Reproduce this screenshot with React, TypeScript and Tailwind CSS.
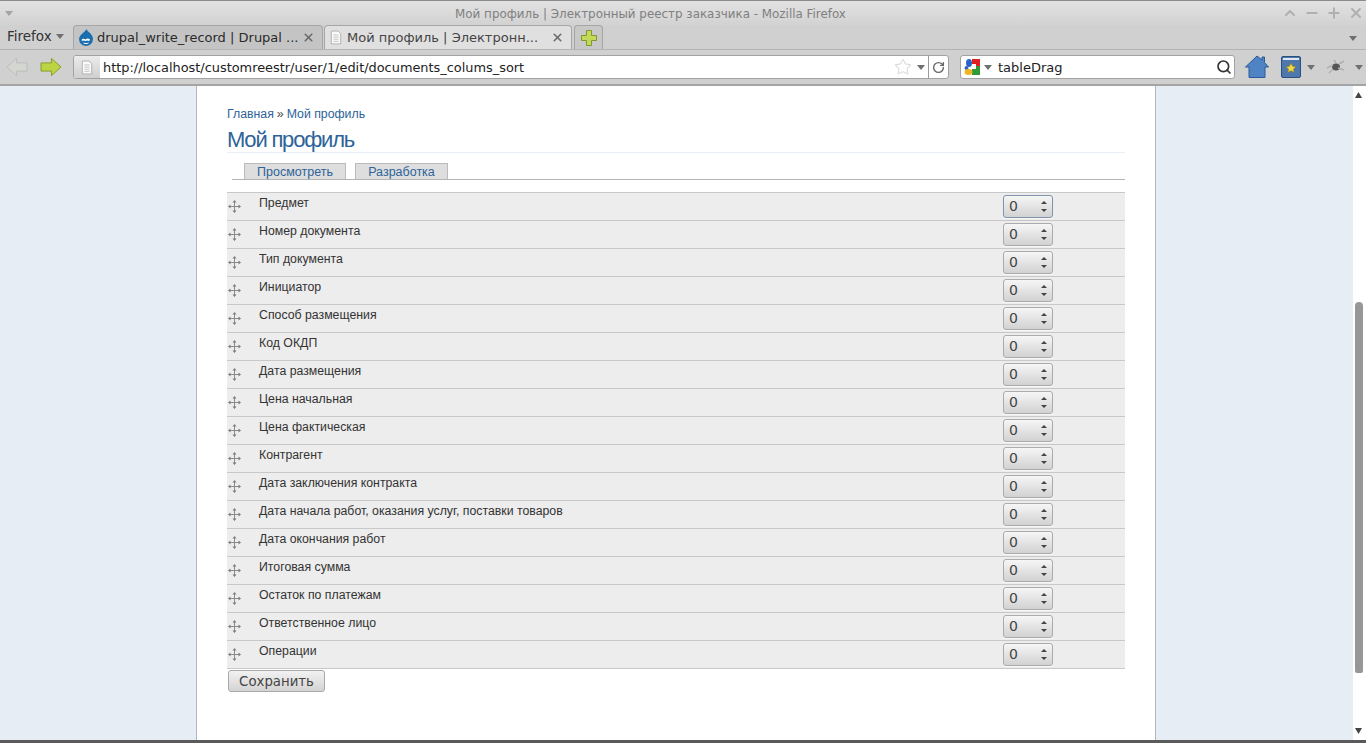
import { ChevronUp, Minus, Plus, X, RotateCw, Search, Star } from 'lucide-react'

const rows = [
  'Предмет',
  'Номер документа',
  'Тип документа',
  'Инициатор',
  'Способ размещения',
  'Код ОКДП',
  'Дата размещения',
  'Цена начальная',
  'Цена фактическая',
  'Контрагент',
  'Дата заключения контракта',
  'Дата начала работ, оказания услуг, поставки товаров',
  'Дата окончания работ',
  'Итоговая сумма',
  'Остаток по платежам',
  'Ответственное лицо',
  'Операции',
]

function Caret({ className = '' }: { className?: string }) {
  return (
    <svg width="8" height="5" viewBox="0 0 8 5" className={className}>
      <path d="M0 0h8L4 5z" fill="#6f6f6f" />
    </svg>
  )
}

function PageIcon() {
  return (
    <svg width="12" height="15" viewBox="0 0 14 16" className="shrink-0">
      <path d="M1.500.5h8l3 3v12h-11z" fill="#fafafa" stroke="#a8a8a8" />
      <path d="M4 5h6M4 7.500h6M4 10h6M4 12.500h6" stroke="#bdbdbd" />
    </svg>
  )
}

function DrupalIcon() {
  return (
    <svg width="16" height="17" viewBox="0 0 16 17" className="shrink-0">
      <path d="M8.500 0c.5 2.500 6.500 5 6.500 10a7 7 0 0 1-14 0C1 5.500 7.500 3 8.500 0z" fill="#1b6fb0" />
      <path d="M3.500 11c1-1.500 2.500-1.500 4-.5 1.500-1 3-1.500 4.500 0-.5 2-2 1.500-2.500 1l-2 .5-2-.5c-.5.500-1.500.500-2-.5z" fill="#fff" />
      <path d="M5.500 14c1.500.8 3.500.8 5 0" stroke="#fff" fill="none" />
    </svg>
  )
}

function GoogleIcon() {
  return (
    <svg width="16" height="16" viewBox="0 0 16 16" className="shrink-0">
      <rect x="8" y="0" width="8" height="7" fill="#e02020" />
      <rect x="8" y="7" width="8" height="9" fill="#2f9a3a" />
      <rect x="8" y="5" width="4" height="5" fill="#fff" />
      <ellipse cx="5" cy="4" rx="3" ry="4" fill="#2a62c8" />
      <circle cx="2.500" cy="9" r="2" fill="#2a62c8" />
      <ellipse cx="4.500" cy="13" rx="4" ry="3" fill="#eeb422" />
    </svg>
  )
}

function DragHandle() {
  return (
    <svg width="13" height="13" viewBox="0 0 13 13" className="mt-[7px] ml-[1px] shrink-0">
      <path d="M6.500 1v11M1 6.500h11" stroke="#8a8a8a" />
      <path d="M6.500 0l2 2.500h-4zM6.500 13l2-2.500h-4zM0 6.500l2.500-2v4zM13 6.500l-2.500-2v4z" fill="#7c7c7c" />
    </svg>
  )
}

function Spinner({ focused }: { focused: boolean }) {
  return (
    <div
      className={`mt-[2px] flex h-[23px] w-[50px] items-center justify-between rounded-[3px] border bg-gradient-to-b from-[#f6f6f6] to-[#d2d2d2] pr-[5px] pl-[5px] font-['DejaVu_Sans',sans-serif] text-[14px] text-[#444] shadow-[0_1px_0_#f8f8f8] ${
        focused ? 'border-[#7f93ad]' : 'border-[#ababab]'
      }`}
    >
      <span>0</span>
      <span className="flex flex-col gap-[5px]">
        <svg width="6" height="3" viewBox="0 0 6 3" className="block">
          <path d="M3 0l3 3H0z" fill="#444" />
        </svg>
        <svg width="6" height="3" viewBox="0 0 6 3" className="block">
          <path d="M0 0h6L3 3z" fill="#444" />
        </svg>
      </span>
    </div>
  )
}

export default function App() {
  return (
    <div className="flex h-[743px] w-[1366px] flex-col overflow-hidden bg-[#d0d0d0] font-['DejaVu_Sans',sans-serif]">
      {/* title bar */}
      <div className="flex h-[25px] shrink-0 items-center justify-between border-t border-[#8c8c8c] bg-gradient-to-b from-[#e2e2e2] to-[#d2d2d2] pr-[2px] pl-[5px]">
        <Caret className="opacity-50" />
        <span className="mt-[4px] ml-[6px] text-[11.9px] text-[#808080]">Мой профиль | Электронный реестр заказчика - Mozilla Firefox</span>
        <div className="flex items-center gap-[6px] text-[#b0b0b0]">
          <ChevronUp size={16} strokeWidth={3} />
          <Minus size={16} strokeWidth={3} />
          <Plus size={16} strokeWidth={3} />
          <X size={16} strokeWidth={3} />
        </div>
      </div>

      {/* tab strip */}
      <div className="flex h-[25px] shrink-0 items-end border-b border-[#b4b4b4] bg-[#d0d0d0] pl-[7px]">
        <div className="flex h-[24px] w-[66px] items-center gap-[4px] pb-[2px] text-[13.5px] text-[#333]">
          Firefox
          <Caret />
        </div>
        <div className="flex h-[24px] w-[250px] items-center gap-[3px] rounded-t-[4px] border border-b-0 border-[#a6a6a6] bg-[#c4c4c4] pr-[7px] pl-[4px] text-[13px] text-[#2a2a2a]">
          <DrupalIcon />
          <span className="flex-1 whitespace-nowrap">drupal_write_record | Drupal ...</span>
          <X size={13} strokeWidth={3} className="shrink-0 text-[#6a6a6a]" />
        </div>
        <div className="ml-[1px] flex h-[24px] w-[248px] items-center gap-[5px] rounded-t-[4px] border border-b-0 border-[#a6a6a6] bg-[#e0e0e0] pr-[7px] pl-[5px] text-[13px] text-[#444]">
          <PageIcon />
          <span className="flex-1 whitespace-nowrap">Мой профиль | Электронн...</span>
          <X size={13} strokeWidth={3} className="shrink-0 text-[#6a6a6a]" />
        </div>
        <div className="ml-[2px] flex h-[24px] w-[29px] items-center justify-center rounded-t-[4px] border border-b-0 border-[#a6a6a6] bg-[#c8c8c8]">
          <svg width="16" height="16" viewBox="0 0 16 16">
            <path d="M5.500.5h5v5h5v5h-5v5h-5v-5h-5v-5h5z" fill="#c4d95a" stroke="#7d9a2a" />
          </svg>
        </div>
        <div className="flex flex-1 justify-end pr-[9px] pb-[8px]">
          <Caret />
        </div>
      </div>

      {/* nav bar */}
      <div className="flex h-[36px] shrink-0 items-center border-b-2 border-[#a4a4a4] bg-[#d0d0d0] pr-[2px] pl-[6px]">
        <svg width="22" height="20" viewBox="0 0 24 22">
          <path d="M1 11L11.500 1.500v5H23v9H11.500v5z" fill="#d4d6d0" stroke="#bcbcb8" />
        </svg>
        <svg width="22" height="20" viewBox="0 0 24 22" className="ml-[12px]">
          <path d="M23 11L12.500 1.500v5H1v9h11.500v5z" fill="#bcd444" stroke="#7f9a22" />
        </svg>
        <div className="ml-[11px] flex h-[24px] w-[876px] items-center rounded-[3px] border border-[#a2a2a2] bg-white text-[12.9px] text-[#222]">
          <span className="flex h-full w-[26px] shrink-0 items-center justify-center rounded-l-[3px] bg-gradient-to-b from-[#ececec] to-[#cfcfcf]">
            <PageIcon />
          </span>
          <span className="mt-[1px] ml-[3px] flex-1 whitespace-nowrap">http://localhost/customreestr/user/1/edit/documents_colums_sort</span>
          <Star size={18} strokeWidth={1.500} className="mr-[5px] text-[#dcdcdc]" />
          <Caret className="mr-[3px]" />
          <span className="flex h-full w-[20px] items-center justify-center border-l border-[#9a9a9a]">
            <RotateCw size={13} strokeWidth={2.500} className="text-[#666]" />
          </span>
        </div>
        <div className="ml-[11px] flex h-[24px] w-[275px] items-center rounded-[3px] border border-[#a2a2a2] bg-white pr-[2px] pl-[3px] text-[13px] text-[#222]">
          <GoogleIcon />
          <Caret className="ml-[4px]" />
          <span className="mt-[1px] ml-[6px] flex-1">tableDrag</span>
          <Search size={16} strokeWidth={2.500} className="text-[#333]" />
        </div>
        <svg width="24" height="24" viewBox="0 0 24 24" className="ml-[10px]">
          <path d="M12 1l5 4V2h2.500v5.500L23.500 12H20v10.500H4V12H.5z" fill="#4f83c4" stroke="#2a5a98" />
        </svg>
        <svg width="20" height="22" viewBox="0 0 20 22" className="ml-[12px]">
          <rect x=".5" y=".5" width="19" height="21" rx="1.500" fill="#4d77ad" stroke="#2c4f80" />
          <rect x="2" y="2" width="16" height="2" fill="#dfe8f2" />
          <path d="M10 7l1.600 3.300 3.400.4-2.500 2.300.7 3.500-3.200-1.800-3.200 1.800.7-3.500L5 10.700l3.400-.4z" fill="#f2d94a" stroke="#8a7a1a" strokeWidth=".6" />
        </svg>
        <Caret className="ml-[6px]" />
        <svg width="20" height="16" viewBox="0 0 20 16" className="ml-[11px]">
          <ellipse cx="10" cy="8" rx="4" ry="3.500" fill="#555" />
          <path d="M7 6L1 9M13 5l5-3M12 9l6 2M7 10l-4 4M10 4L8 1" stroke="#b0b0b0" strokeWidth="1.500" />
        </svg>
        <Caret className="ml-[9px]" />
      </div>

      {/* viewport */}
      <div className="flex min-h-0 flex-1">
        <div className="w-[196px] shrink-0 bg-[#e6edf5]" />
        <main className="flex w-[960px] shrink-0 flex-col border-x border-[#b4b8bd] bg-white px-[30px] pt-[21px] font-['Liberation_Sans',sans-serif]">
          <div className="flex h-[14px] items-center text-[12.3px] text-[#2d6399]">
            <span>Главная</span>
            <span className="mx-[3px] text-[#444]">»</span>
            <span>Мой профиль</span>
          </div>
          <h1 className="mt-[6px] h-[26px] border-b border-[#e8eef5] text-[22px] leading-[26px] tracking-[-1.2px] text-[#2d6399]">
            Мой профиль
          </h1>
          <div className="mt-[11px] ml-[5px] flex h-[16px] items-end border-b border-[#b4b4b4] pl-[12px] text-[12.5px] text-[#2d6399]">
            <span className="flex h-[16px] w-[102px] items-center justify-center border border-b-0 border-[#bbb] bg-[#dedede] pt-[1px]">
              Просмотреть
            </span>
            <span className="ml-[9px] flex h-[16px] w-[93px] items-center justify-center border border-b-0 border-[#bbb] bg-[#dedede] pt-[1px]">
              Разработка
            </span>
          </div>
          <div className="mt-[12px] border-t border-[#c8c8c8]">
            {rows.map((row, i) => (
              <div key={row} className="flex h-[28px] items-start border-b border-[#c8c8c8] bg-[#ededed] text-[12.3px] text-[#333]">
                <DragHandle />
                <span className="ml-[18px] flex-1 pt-[2px] leading-[16px]">{row}</span>
                <div className="w-[122px] shrink-0">
                  <Spinner focused={i === 0} />
                </div>
              </div>
            ))}
          </div>
          <button className="mt-[1px] ml-[1px] flex h-[22px] w-[97px] items-center justify-center rounded-[3px] border border-[#a8a8a8] bg-gradient-to-b from-[#f2f2f2] to-[#d4d4d4] pt-[1px] font-['DejaVu_Sans',sans-serif] text-[13.3px] text-[#444]">
            Сохранить
          </button>
        </main>
        <div className="flex-1 bg-[#e6edf5]" />
        <div className="relative w-[13px] shrink-0 bg-white">
          <svg width="7" height="6" viewBox="0 0 7 6" className="absolute top-[6px] left-[2px]">
            <path d="M3.500 0L7 6H0z" fill="#444" />
          </svg>
          <div className="absolute top-[216px] left-[2px] h-[371px] w-[8px] rounded-t-[4px] rounded-b-[2px] bg-[#979797]" />
          <svg width="7" height="6" viewBox="0 0 7 6" className="absolute bottom-[6px] left-[2px]">
            <path d="M0 0h7L3.500 6z" fill="#444" />
          </svg>
        </div>
      </div>
      <div className="h-[3px] shrink-0 bg-[#5a5a5a]" />
    </div>
  )
}
